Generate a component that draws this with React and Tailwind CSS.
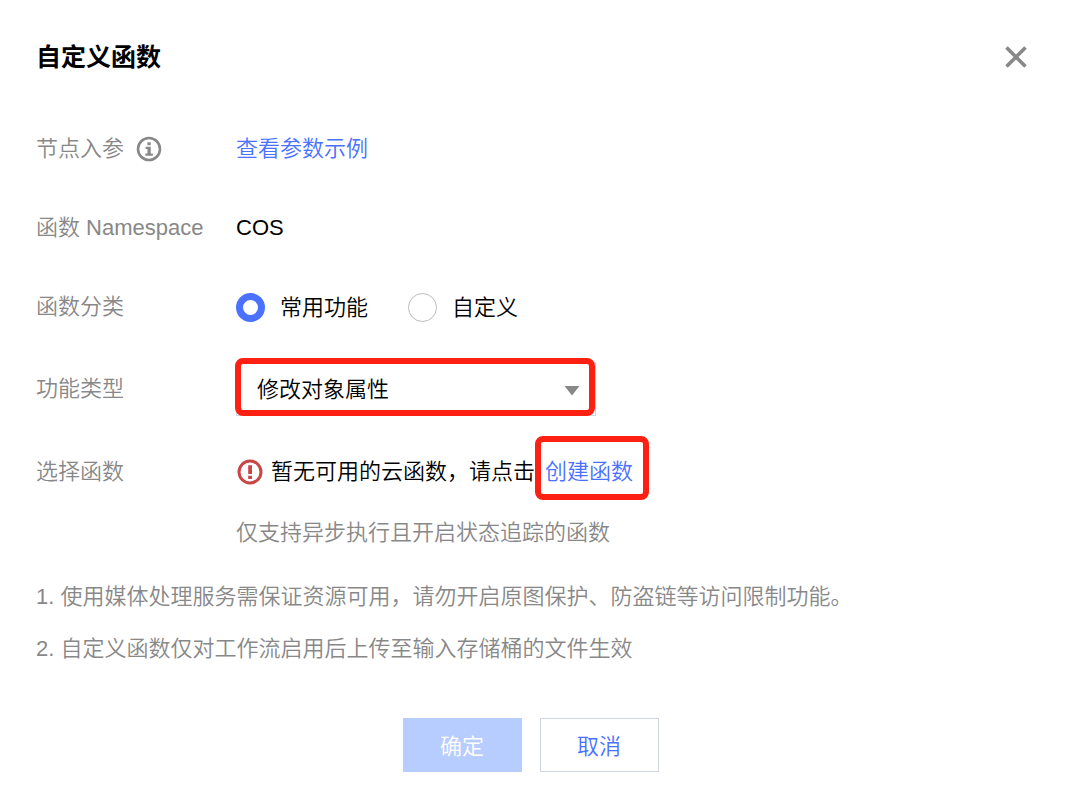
import React, { useState } from 'react'

const Row = ({ label, htmlFor, icon, className = 'h-14', children }) => {
  return (
    <div className={`flex items-center ${className}`}>
      <div className="flex w-[200px] shrink-0 items-center gap-3 text-[#888888]">
        {htmlFor ? <label htmlFor={htmlFor}>{label}</label> : <span>{label}</span>}
        {icon}
      </div>
      {children}
    </div>
  )
}

const InfoIcon = () => (
  <svg width="26" height="26" viewBox="0 0 26 26" fill="none">
    <circle cx="13" cy="13" r="11" stroke="#888888" strokeWidth="2.6" />
    <path d="M11.4 6.2h3.3v3h-3.3zM9.6 10.8h5.1v6.6h2.1v2.3H9.4v-2.3h2.1v-4.3H9.6z" fill="#888888" />
  </svg>
)

const WarnIcon = () => (
  <svg width="26" height="26" viewBox="0 0 26 26" fill="none" className="shrink-0">
    <circle cx="13" cy="13" r="11" stroke="#c84646" strokeWidth="3" />
    <path d="M11.2 6.2h3.8v8.8h-3.8zM11.2 16.8h3.8v3.2h-3.8z" fill="#c84646" />
  </svg>
)

const Radio = ({ value, current, onChange, children }) => (
  <label className="flex items-center gap-[15px]">
    <input
      type="radio"
      name="category"
      value={value}
      checked={current === value}
      onChange={() => onChange(value)}
      className="size-[29px] appearance-none rounded-full border border-[#bbbbbb] bg-white checked:border-[7px] checked:border-[#4a71ff]"
    />
    <span className="pt-0.5">{children}</span>
  </label>
)

const App = () => {
  const [category, setCategory] = useState('common')

  return (
    <div
      role="dialog"
      aria-labelledby="dialog-title"
      className="min-h-screen bg-white px-9 pt-[37px] pb-9 font-['Liberation_Sans','Noto_Sans_CJK_SC',sans-serif] text-[22px] leading-8 font-[350] text-black"
    >
      <div className="flex h-10 items-center justify-between">
        <h2 id="dialog-title" className="text-[25px] font-bold">自定义函数</h2>
        <button type="button" aria-label="关闭" className="pr-0.5">
          <svg width="22" height="22" viewBox="0 0 22 22" fill="none">
            <path d="M1.5 1.5l19 19M20.5 1.5l-19 19" stroke="#888888" strokeWidth="3.6" />
          </svg>
        </button>
      </div>

      <form className="mt-11 flex flex-col gap-[23px]" onSubmit={(e) => e.preventDefault()}>
        <Row label="节点入参" icon={<InfoIcon />}>
          <a href="#example" className="text-[#4a71ff]">查看参数示例</a>
        </Row>

        <Row label="函数 Namespace">
          <span>COS</span>
        </Row>

        <Row label="函数分类">
          <div className="flex gap-10">
            <Radio value="common" current={category} onChange={setCategory}>常用功能</Radio>
            <Radio value="custom" current={category} onChange={setCategory}>自定义</Radio>
          </div>
        </Row>

        <Row label="功能类型" htmlFor="func-type" className="h-[58px] pt-1">
          <div className="relative w-[360px]">
            <select
              id="func-type"
              className="block h-[54px] w-full appearance-none border border-[#cfd5de] bg-white pt-0.5 pl-5"
            >
              <option>修改对象属性</option>
            </select>
            <svg width="16" height="10" viewBox="0 0 16 10" className="pointer-events-none absolute top-6 right-4">
              <path d="M0.5 0h15L8 9.5z" fill="#888888" />
            </svg>
            {/* highlight */}
            <span className="pointer-events-none absolute -top-1 right-px bottom-0 -left-px rounded-lg border-6 border-[#ff2014]" />
          </div>
        </Row>

        <Row label="选择函数" className="h-[66px]">
          <div className="flex items-center pl-px">
            <WarnIcon />
            <span className="ml-2">暂无可用的云函数，请点击</span>
            <span className="relative px-2.5">
              <a href="#create" className="text-[#4a71ff]">创建函数</a>
              <span className="pointer-events-none absolute -top-5 -right-1.5 -bottom-3 left-0 rounded-lg border-6 border-[#ff2014]" />
            </span>
          </div>
        </Row>
      </form>

      <p className="mt-3 ml-[200px] text-[#888888]">仅支持异步执行且开启状态追踪的函数</p>

      <div className="mt-8 flex flex-col gap-5 text-[#888888]">
        <p>1. 使用媒体处理服务需保证资源可用，请勿开启原图保护、防盗链等访问限制功能。</p>
        <p>2. 自定义函数仅对工作流启用后上传至输入存储桶的文件生效</p>
      </div>

      <div className="mt-[53px] flex justify-center gap-[18px] pr-1">
        <button type="button" disabled className="h-[54px] w-[119px] bg-[#b7cdff] pt-1 text-white">确定</button>
        <button type="button" className="h-[54px] w-[119px] border border-[#cfd5de] pt-1 text-[#4a71ff]">取消</button>
      </div>
    </div>
  )
}

export default App
